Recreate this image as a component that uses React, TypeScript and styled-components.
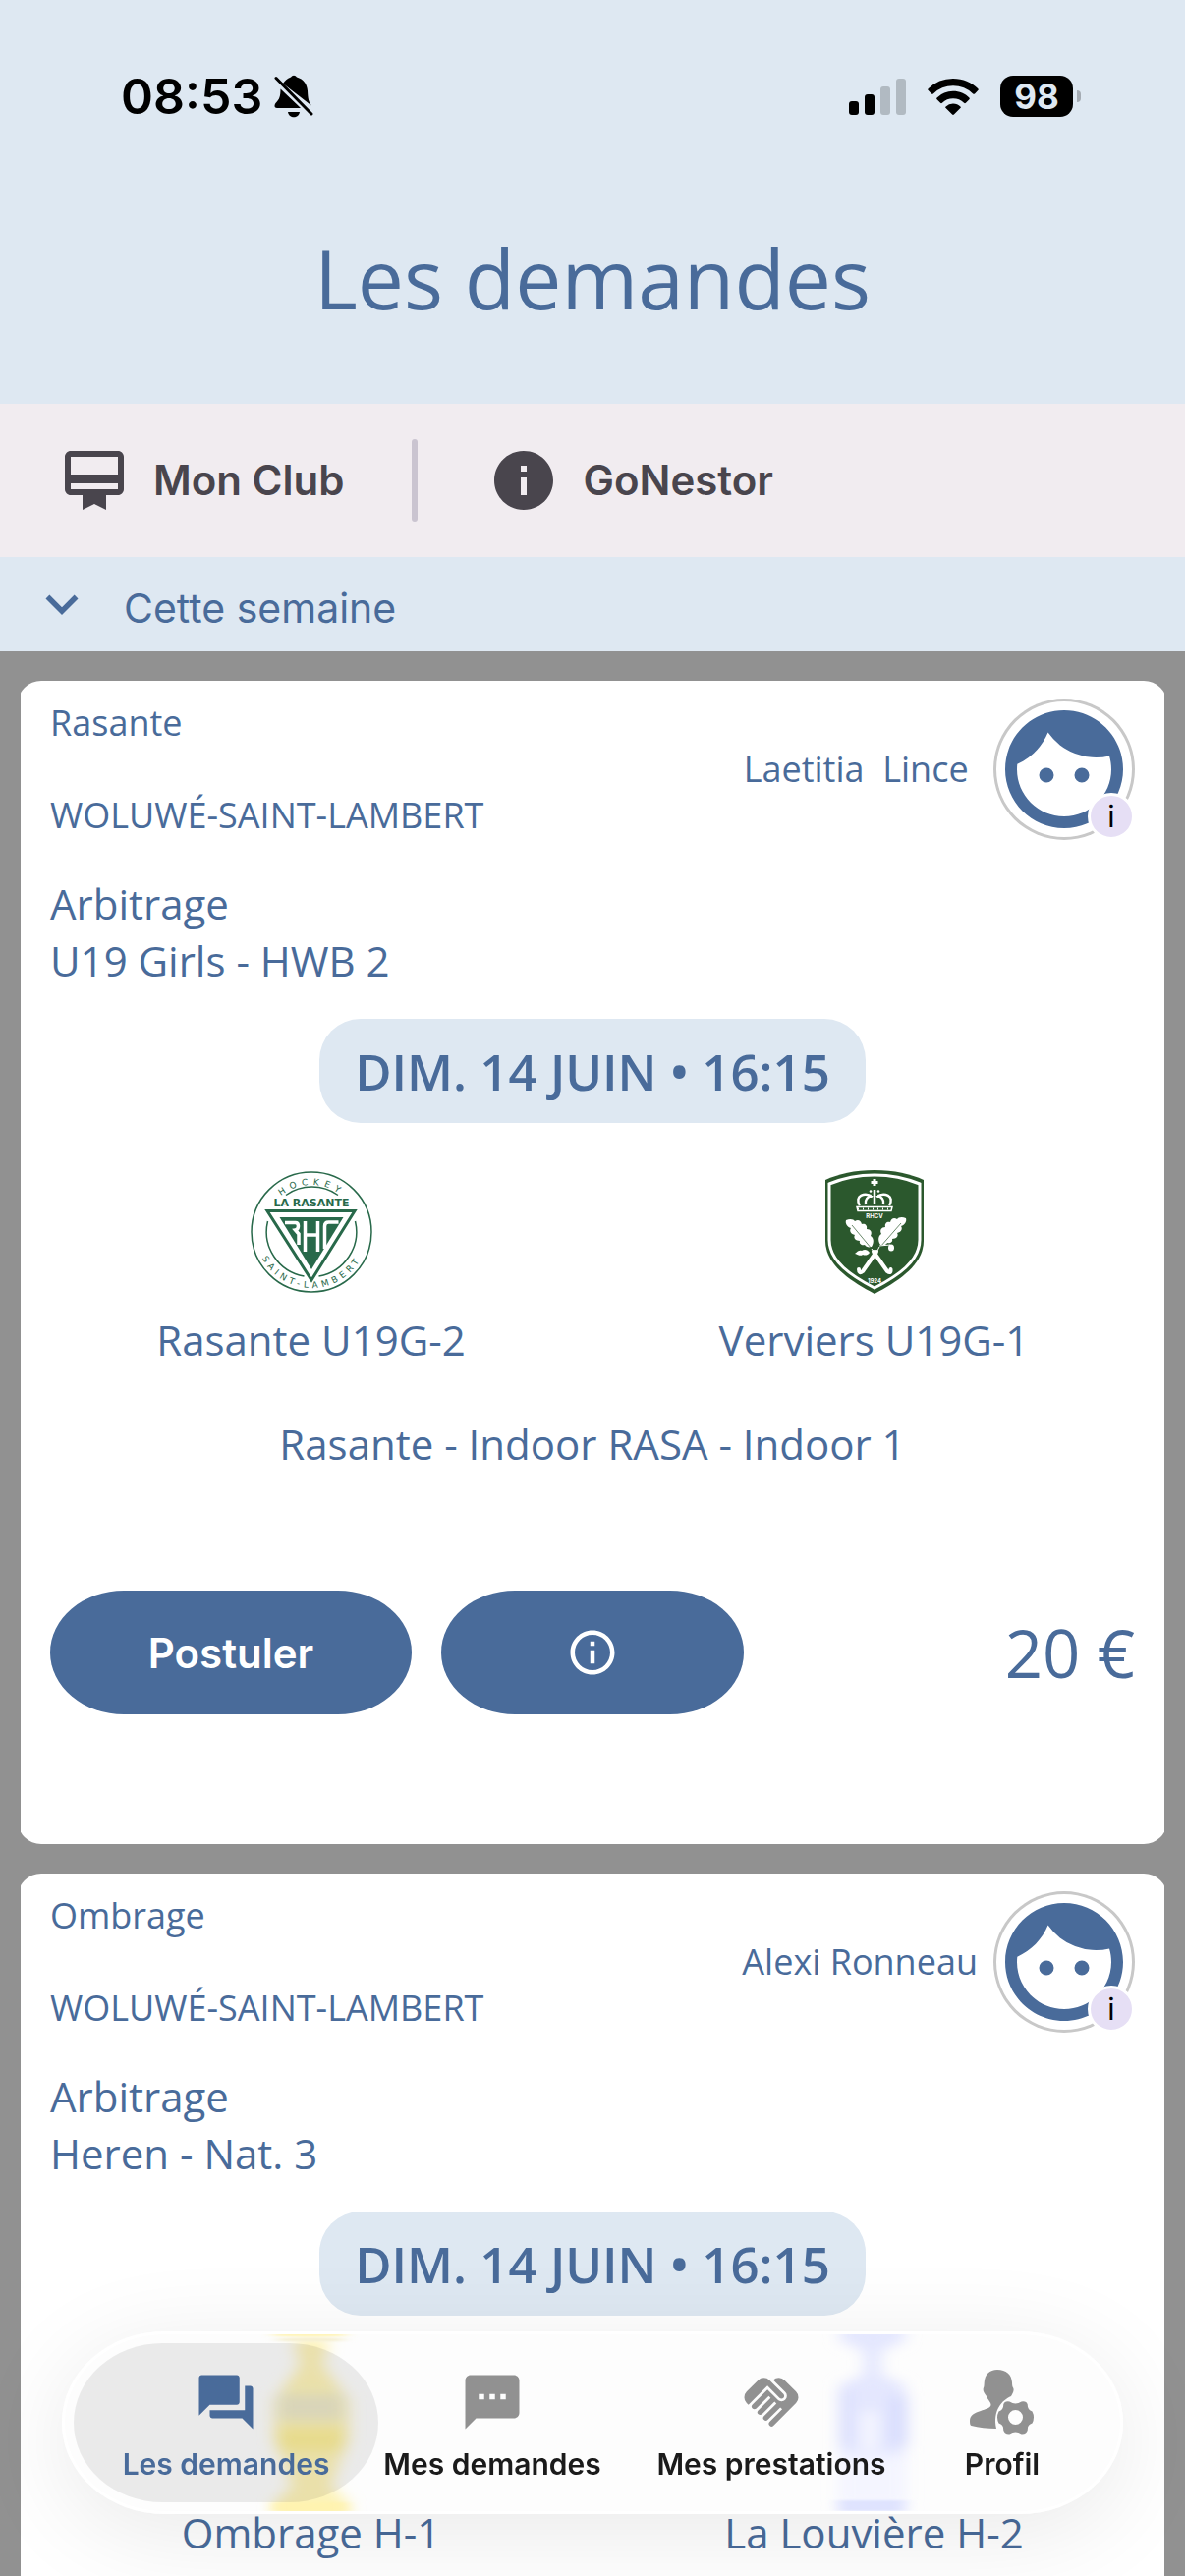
import styled, { createGlobalStyle } from "styled-components";
import {
  MdCardMembership,
  MdExpandMore,
  MdFace,
  MdForum,
  MdHandshake,
  MdInfo,
  MdInfoOutline,
  MdTextsms,
} from "react-icons/md";

const GlobalStyle = createGlobalStyle`
  :root {
    --color-blue: #496b9a;
    --color-sky: #dee8f2;
    --color-mauve: #f1ecf0;
    --color-ink: #49454d;
    --color-gray: #919191;
    --font-text: "Open Sans", sans-serif;
    --font-ui: Inter, sans-serif;
  }

  * {
    box-sizing: border-box;
    margin: 0;
    padding: 0;
  }

  body {
    background: var(--color-gray);
  }

  button {
    border: none;
    background: none;
    font-family: var(--font-ui);
    cursor: pointer;
  }

  svg {
    display: block;
    flex-shrink: 0;
  }
`;

const Page = styled.div`
  height: 100vh;
  display: flex;
  flex-direction: column;
  overflow: hidden;
  color: var(--color-blue);
  font-family: var(--font-text);
  font-size: 42px;
  line-height: 58px;
`;

const Header = styled.header`
  background: var(--color-sky);
`;

const StatusBar = styled.div`
  display: flex;
  align-items: center;
  justify-content: space-between;
  padding: 66px 114px 0 123px;
  color: #000;
  font-family: var(--font-ui);
`;

const StatusGroup = styled.div<{ $gap: number }>`
  display: flex;
  align-items: center;
  gap: ${({ $gap }) => $gap}px;
  height: 64px;
`;

const Time = styled.span`
  font-size: 50px;
  font-weight: 600;
`;

const Battery = styled.div`
  position: relative;
  width: 74px;
  height: 42px;
  border-radius: 13px;
  background: #000;
  color: var(--color-sky);
  font-size: 35px;
  font-weight: 700;
  line-height: 42px;
  text-align: center;

  &::after {
    content: "";
    position: absolute;
    right: -8px;
    top: 15px;
    width: 4px;
    height: 12px;
    border-radius: 0 4px 4px 0;
    background: #a4abb3;
  }
`;

const Title = styled.h1`
  padding: 96px 0 71px;
  font-size: 84px;
  font-weight: 400;
  line-height: 114px;
  text-align: center;
`;

const Toolbar = styled.nav`
  display: flex;
  align-items: center;
  height: 156px;
  padding: 0 36px;
  background: var(--color-mauve);
`;

const ToolbarButton = styled.button`
  display: flex;
  align-items: center;
  gap: 24px;
  padding: 0 24px;
  color: var(--color-ink);
  font-size: 42px;
  font-weight: 600;
  line-height: 58px;
`;

const Divider = styled.span`
  width: 6px;
  height: 84px;
  margin: 0 48px 0 45px;
  border-radius: 3px;
  background: #cac4d0;
`;

const Section = styled.button`
  display: flex;
  align-items: center;
  gap: 30px;
  height: 96px;
  padding: 0 30px;
  background: var(--color-sky);
  color: var(--color-blue);
  font-size: 41px;
  line-height: 58px;
`;

const SectionLabel = styled.span`
  padding-top: 8px;
`;

const List = styled.main`
  flex: 1;
  min-height: 0;
  display: flex;
  flex-direction: column;
  gap: 30px;
  margin: 30px 21px 0;
  overflow: hidden;
`;

const Card = styled.article`
  flex-shrink: 0;
  margin: 0 -3px;
  padding: 18px 33px 132px;
  border-radius: 24px;
  background: #fff;
`;

const CardHeader = styled.div`
  display: flex;
  align-items: center;
  justify-content: space-between;
  font-size: 36px;
  line-height: 48px;
`;

const Place = styled.div`
  display: grid;
  align-self: flex-start;
  gap: 46px;
  padding-top: 1px;
`;

const Person = styled.div`
  display: flex;
  align-items: center;
  gap: 16px;
  white-space: pre;
`;

const Avatar = styled.button`
  position: relative;
  width: 144px;
  height: 144px;
  border-radius: 50%;
  box-shadow: inset 0 0 0 3px #c8c8c8;
  color: var(--color-blue);
`;

const Badge = styled.span`
  position: absolute;
  right: 0;
  bottom: 0;
  width: 48px;
  height: 48px;
  border: 3px solid #fff;
  border-radius: 50%;
  background: #e6dff5;
  color: #000;
  font-size: 30px;
  line-height: 42px;
`;

const Role = styled.div`
  margin-top: 36px;
`;

const When = styled.time`
  display: block;
  width: fit-content;
  margin: 30px auto 48px;
  padding: 18px 36px;
  border-radius: 42px;
  background: var(--color-sky);
  font-size: 51px;
  font-weight: 600;
  line-height: 70px;
`;

const Teams = styled.div`
  display: grid;
  grid-template-columns: 1fr 1fr;
  margin: 0 -21px;
`;

const Team = styled.div`
  display: flex;
  flex-direction: column;
  align-items: center;
  gap: 18px;
`;

const Venue = styled.p`
  margin-top: 48px;
  text-align: center;
`;

const Actions = styled.div`
  display: flex;
  align-items: center;
  gap: 30px;
  margin-top: 120px;
`;

const PillButton = styled.button<{ $width: number }>`
  display: flex;
  align-items: center;
  justify-content: center;
  width: ${({ $width }) => $width}px;
  height: 126px;
  border-radius: 75px / 63px;
  background: var(--color-blue);
  color: #fff;
  font-size: 42px;
  font-weight: 600;
`;

const Price = styled.span`
  margin-left: auto;
  font-size: 67px;
  line-height: 90px;
`;

const TabBar = styled.nav`
  position: fixed;
  left: 63px;
  right: 63px;
  bottom: 63px;
  display: grid;
  grid-template-columns: 310fr 232fr 336fr 134fr;
  height: 186px;
  padding: 12px 56px 12px 12px;
  border-radius: 105px / 93px;
  background: #fdfdfd;
  box-shadow: 0 18px 100px rgba(0, 0, 0, 0.09), inset 0 0 0 3px #fff;
`;

const Glow = styled.svg`
  position: absolute;
  top: 0;
  left: 0;
  width: 100%;
  height: 100%;
`;

const Tab = styled.button<{ $active?: boolean }>`
  position: relative;
  display: flex;
  flex-direction: column;
  align-items: center;
  gap: 10px;
  padding-top: 27px;
  border-radius: 90px / 81px;
  background: ${({ $active }) => ($active ? "rgba(0, 0, 0, 0.075)" : "none")};
  color: ${({ $active }) => ($active ? "var(--color-blue)" : "#1b1b1b")};
  font-size: 30px;
  font-weight: 600;
  line-height: 40px;
  white-space: nowrap;

  svg {
    color: ${({ $active }) => ($active ? "var(--color-blue)" : "var(--color-gray)")};
  }
`;

function BellOff() {
  return (
    <svg width="40" height="44" viewBox="0 0 40 44">
      <path d="M9 9c2-3 4-5 8-6.500a3.500 3.500 0 0 1 6 0c7 2 10.500 7 11 14 .4 8 1 11 4 15z" />
      <path d="M6.500 14.500 27 34H3c-3 0-3-3-1.500-5 4-4 5-7 5-14.500z" />
      <path d="M14 38h12c-1 7-11 7-12 0z" />
      <path d="M2 3.500 38 40" stroke="#000" strokeWidth="3" strokeLinecap="round" />
    </svg>
  );
}

function Signal() {
  return (
    <svg width="58" height="37" viewBox="0 0 58 37">
      <rect y="23" width="10" height="14" rx="3" />
      <rect x="16" y="16" width="10" height="21" rx="3" />
      <rect x="32" y="8" width="10" height="29" rx="3" fill="#b1bac2" />
      <rect x="48" width="10" height="37" rx="3" fill="#b1bac2" />
    </svg>
  );
}

function Wifi() {
  return (
    <svg width="52" height="37" viewBox="0 0 52 37">
      <path d="M26 0c10 0 19 4 25.300 10.300.6.600.6 1.200 0 1.800l-3.300 3.300c-.6.600-1.200.6-1.800 0a29 29 0 0 0-40.400 0c-.6.600-1.200.6-1.800 0L.7 12.100c-.6-.6-.6-1.200 0-1.800A36 36 0 0 1 26 0z" />
      <path d="M26 12.800c6.400 0 12.200 2.500 16.400 6.600.6.600.6 1.200 0 1.800l-3.500 3.500c-.6.600-1.200.6-1.800 0a16 16 0 0 0-22.200 0c-.6.600-1.200.6-1.800 0l-3.500-3.500c-.6-.6-.6-1.200 0-1.800A23.500 23.500 0 0 1 26 12.800z" />
      <path d="M26 25.500c2.900 0 5.500 1.100 7.400 2.900.6.600.6 1.100 0 1.700l-6.500 6.400c-.6.600-1.200.6-1.800 0l-6.500-6.400c-.6-.6-.6-1.100 0-1.700a10.700 10.700 0 0 1 7.400-2.900z" />
    </svg>
  );
}

function RasanteCrest() {
  return (
    <svg width="126" height="126" viewBox="0 0 126 126" fill="none" stroke="#28694a" fontFamily="DejaVu Sans, sans-serif">
      <defs>
        <path id="rasante-top" d="M15 63a48 48 0 0 1 96 0" />
        <path id="rasante-bottom" d="M6 63a57 57 0 0 0 114 0" />
      </defs>
      <circle cx="63" cy="63" r="61" strokeWidth="1.500" />
      <path d="M37 25.500a46 46 0 0 1 53 0M18.500 52a46 46 0 0 0 37 56M107.500 52a46 46 0 0 1-37 56" strokeWidth="1.500" />
      <path d="M18 41.500h89L63 112z" strokeWidth="3" />
      <path d="M30.500 48h65L63 101z" fill="#28694a" stroke="none" />
      <path d="M36 53.500h10.500q3 0 3 3.500t-3 4l3.500 4v11M56.500 52v31M69.500 52v31M56.500 66h13M76.500 80V57q0-4 4-4h10" stroke="#fff" strokeWidth="3.500" />
      <g fill="#28694a" stroke="none">
        <text x="63" y="37" fontSize="11" fontWeight="700" textAnchor="middle">LA RASANTE</text>
        <text fontSize="9" letterSpacing="5">
          <textPath href="#rasante-top" startOffset="50%" textAnchor="middle">HOCKEY</textPath>
        </text>
        <text fontSize="9" letterSpacing="4">
          <textPath href="#rasante-bottom" startOffset="50%" textAnchor="middle">SAINT-LAMBERT</textPath>
        </text>
      </g>
    </svg>
  );
}

const LEAF =
  "M0 0c-3 1-6 0-7-2-3 1-6-1-5-4-4 0-7-3-5-6-4-1-6-4-4-7-4-1-6-5-5-8 4-2 8-1 9 1 3-2 6-1 7 3 3-1 6 1 5 5 4 0 6 3 4 7 3 2 4 6 1 11z";

function VerviersCrest() {
  return (
    <svg width="126" height="126" viewBox="0 0 126 126" fontFamily="Inter, sans-serif">
      <path d="M63 0c20 0 37 4 50 10v62c0 24-24 40-50 54-26-14-50-30-50-54V10C26 4 43 0 63 0z" fill="#2b582d" />
      <path d="M63 5c18 0 34 4 46 9v57c0 22-23 37-46 49-23-12-46-27-46-49V14C29 9 45 5 63 5z" fill="none" stroke="#fff" strokeWidth="3" />
      <path d="M63 9v7M59.500 12.500h7" stroke="#fff" strokeWidth="3" />
      <g fill="none" stroke="#fff" strokeWidth="2.500">
        <path d="M48 36c-6-10 5-14 13-9M78 36c6-10-5-14-13-9M54 35c-1-5 2-8 6-9M72 35c1-5-2-8-6-9M63 20v15" />
        <path d="M45 37.500h36l-1 4H46z" strokeWidth="1.500" />
        <path d="M46 39.500h34" strokeWidth="2" strokeDasharray="1 4" />
      </g>
      <g fill="#fff">
        <circle cx="59" cy="21.500" r="1.300" />
        <circle cx="67" cy="21.500" r="1.300" />
        <path d={LEAF} transform="translate(60 78)" />
        <path d={LEAF} transform="matrix(-1 0 0 1 69 76)" />
        <path d="M58 84c-2 3-5 3-7 2-2 2-5 0-8-1 3-3 5-4 7-3 3-2 6-1 8 2z" />
        <ellipse cx="80" cy="79" rx="3" ry="3.500" />
      </g>
      <text x="63" y="49" fontSize="6" fontWeight="700" fill="#fff" textAnchor="middle">RHCV</text>
      <path d="M40 56l20 24M90 54L69 78" stroke="#2b582d" strokeWidth=".7" />
      <path d="M60 80l4 6 4-8M68 77l11-1" fill="none" stroke="#fff" strokeWidth="1" />
      <path d="M62 83l14 20q4 3 3.500-2M65 83L51 103q-4 3-4-2" fill="none" stroke="#fff" strokeWidth="4" strokeLinecap="round" />
      <text x="63" y="115" fontSize="6" fontWeight="700" fill="#fff" textAnchor="middle">1924</text>
    </svg>
  );
}

function OmbrageCrest() {
  return (
    <svg width="126" height="126" viewBox="0 0 126 126">
      <path d="M63 4l40 20v50L63 122 23 74V24z" fill="#f5e68c" />
    </svg>
  );
}

function LouviereCrest() {
  return (
    <svg width="126" height="126" viewBox="0 0 126 126">
      <path d="M26 6h74v74L63 120 26 80z" fill="#c9cffa" />
    </svg>
  );
}

// Colour of the crests showing through the frosted tab bar
function CrestGlow() {
  return (
    <Glow viewBox="0 0 1080 186" preserveAspectRatio="none" aria-hidden="true">
      <defs>
        <filter id="glow" x="-30%" y="-10%" width="160%" height="120%">
          <feGaussianBlur stdDeviation="8 6" />
        </filter>
        <filter id="glow-edge" x="-30%" y="-80%" width="160%" height="260%">
          <feGaussianBlur stdDeviation="7 1" />
        </filter>
        <clipPath id="glow-clip">
          <rect y="3" width="1080" height="180" />
        </clipPath>
      </defs>
      <g clipPath="url(#glow-clip)">
        <g filter="url(#glow)" fill="#fdf3b8">
          <path d="M236 8h36l-6 26 14 20 12 16v40l-10 24-8 24 18 16v20h-76v-20l18-16-8-24-10-24V70l12-16 14-20z" />
          <path d="M220 98h66v24h-66z" fill="#f8e98c" opacity=".7" />
          <path d="M220 64h66v26h-66z" fill="#e6e3cc" opacity=".8" />
        </g>
        <path d="M216 2h72v3h-72zM216 174h72v9h-72z" fill="#fff3b0" filter="url(#glow-edge)" />
        <path d="M220 7h66v3h-66z" fill="#f4eed0" filter="url(#glow-edge)" />
        <g filter="url(#glow)" fill="#e4e7fe">
          <path d="M792-8h66v18l-24 10v24l24 10v80h-66V54l24-10V20l-24-10z" />
          <path d="M792 60h10v56h-10zM844 66h16v50h-16z" fill="#d5dafd" />
          <path d="M814 82h16v40h-16z" fill="#f6f7ff" />
          <path d="M790 126h70v52h-70z" fill="#f4f5ff" />
        </g>
        <path d="M790 172h68v11h-68z" fill="#dfe3fe" filter="url(#glow-edge)" />
      </g>
    </Glow>
  );
}

function ProfileCog() {
  return (
    <svg width="66" height="66" viewBox="0 0 66 66" fill="currentColor">
      <path d="M28 0c9 0 14.500 5 15 13 .1 3 .2 4 1.400 6 .8 2-.6 5-2.400 8-9 4-19 14-15 33-9 0-18-1-25.500-3C.3 56.500 0 55 0 52c0-6 5-8 11-10 5-2 10-3 10.500-6 .2-3-3-5-4.500-9-2-3-4-5-3.300-8 .9-2 .8-3 1-6C15.300 5 20 0 28 0z" />
      <path
        transform="translate(46.500 48.500)"
        fillRule="evenodd"
        d="M-6-16Q0-12 6-16Q11-17 12.300-13Q12-7.500 17-6Q20 0 17 6Q12 7.500 12.300 13Q11 17.500 6 17Q0 13-6 17Q-11 17.500-12.300 13Q-12 7.500-17 6Q-20 0-17-6Q-12-7.500-12.300-13Q-11-17-6-16zM0-7.500a7.500 7.500 0 1 0 0 15 7.500 7.500 0 0 0 0-15z"
      />
    </svg>
  );
}

const requests = [
  {
    club: "Rasante",
    city: "WOLUWÉ-SAINT-LAMBERT",
    person: "Laetitia  Lince ",
    role: "Arbitrage",
    level: "U19 Girls - HWB 2",
    when: "DIM. 14 JUIN • 16:15",
    home: { name: "Rasante U19G-2", crest: <RasanteCrest /> },
    away: { name: "Verviers U19G-1", crest: <VerviersCrest /> },
    venue: "Rasante - Indoor RASA - Indoor 1",
    price: "20 €",
  },
  {
    club: "Ombrage",
    city: "WOLUWÉ-SAINT-LAMBERT",
    person: "Alexi Ronneau",
    role: "Arbitrage",
    level: "Heren - Nat. 3",
    when: "DIM. 14 JUIN • 16:15",
    home: { name: "Ombrage H-1", crest: <OmbrageCrest /> },
    away: { name: "La Louvière H-2", crest: <LouviereCrest /> },
  },
];

function RequestCard({ request }: { request: (typeof requests)[number] }) {
  return (
    <Card>
      <CardHeader>
        <Place>
          <span>{request.club}</span>
          <span>{request.city}</span>
        </Place>
        <Person>
          <span>{request.person}</span>
          <Avatar aria-label={request.person}>
            <MdFace size={144} />
            <Badge>i</Badge>
          </Avatar>
        </Person>
      </CardHeader>
      <Role>
        <p>{request.role}</p>
        <p>{request.level}</p>
      </Role>
      <When>{request.when}</When>
      <Teams>
        {[request.home, request.away].map((team) => (
          <Team key={team.name}>
            {team.crest}
            <span>{team.name}</span>
          </Team>
        ))}
      </Teams>
      {request.venue && <Venue>{request.venue}</Venue>}
      {request.price && (
        <Actions>
          <PillButton $width={368}>Postuler</PillButton>
          <PillButton $width={308} aria-label="Informations">
            <MdInfoOutline size={54} />
          </PillButton>
          <Price>{request.price}</Price>
        </Actions>
      )}
    </Card>
  );
}

function App() {
  return (
    <Page>
      <GlobalStyle />
      <Header>
        <StatusBar>
          <StatusGroup $gap={12}>
            <Time>08:53</Time>
            <BellOff />
          </StatusGroup>
          <StatusGroup $gap={22}>
            <Signal />
            <Wifi />
            <Battery>98</Battery>
          </StatusGroup>
        </StatusBar>
        <Title>Les demandes</Title>
      </Header>
      <Toolbar>
        <ToolbarButton>
          <MdCardMembership size={72} />
          Mon Club
        </ToolbarButton>
        <Divider />
        <ToolbarButton>
          <MdInfo size={72} />
          GoNestor
        </ToolbarButton>
      </Toolbar>
      <Section>
        <MdExpandMore size={66} />
        <SectionLabel>Cette semaine</SectionLabel>
      </Section>
      <List>
        {requests.map((request) => (
          <RequestCard key={request.club} request={request} />
        ))}
      </List>
      <TabBar>
        <CrestGlow />
        <Tab $active>
          <MdForum size={66} />
          Les demandes
        </Tab>
        <Tab>
          <MdTextsms size={66} />
          Mes demandes
        </Tab>
        <Tab>
          <MdHandshake size={66} />
          Mes prestations
        </Tab>
        <Tab>
          <ProfileCog />
          Profil
        </Tab>
      </TabBar>
    </Page>
  );
}

export default App;
